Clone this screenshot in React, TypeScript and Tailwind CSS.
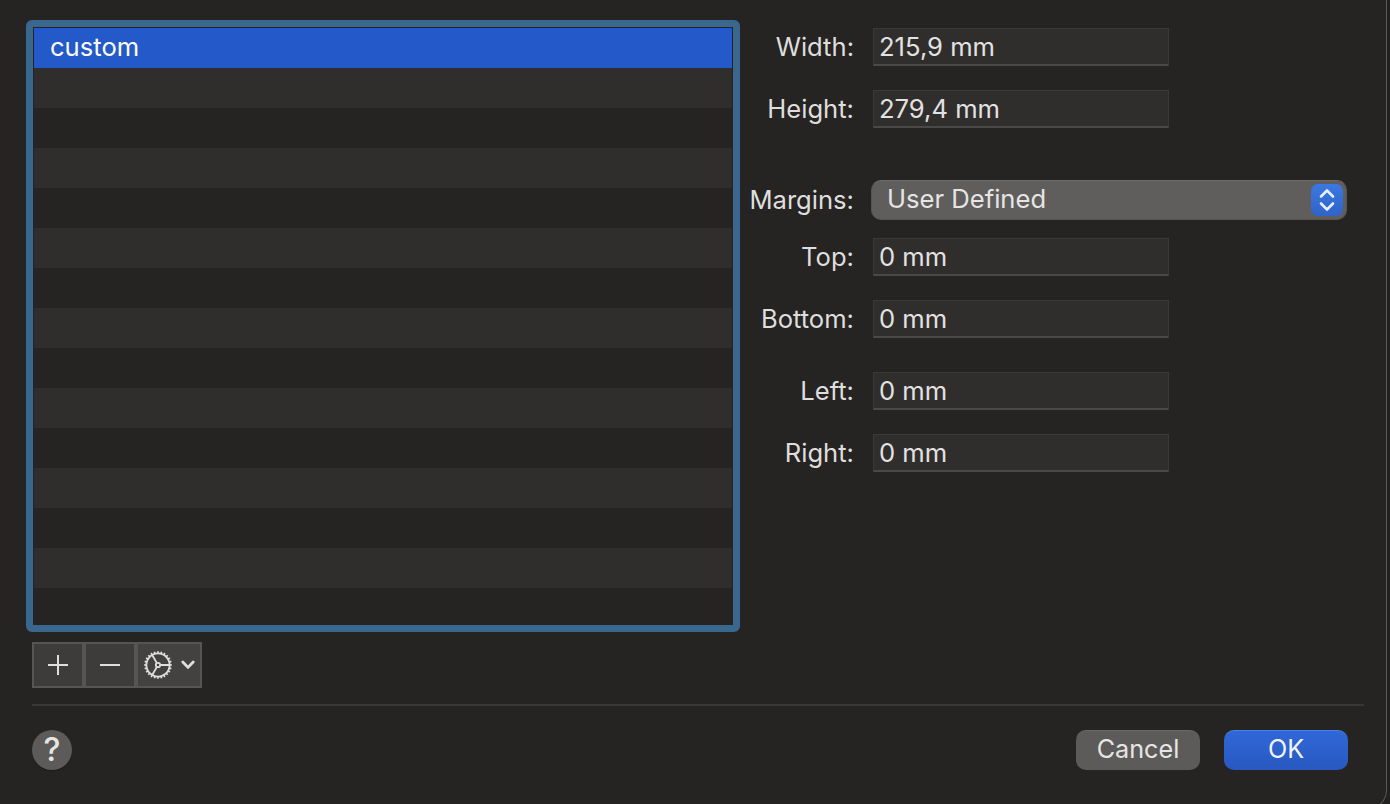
import React from 'react';

const font = "font-['Inter','Liberation_Sans',sans-serif]";

const Field: React.FC<{ label: string; value: string; className?: string }> = ({ label, value, className = '' }) => (
  <div className={`flex items-center h-[38px] ${className}`}>
    <label className="w-[130px] text-right text-[25.6px] text-[#dfdedd] leading-none pr-[1px]">{label}</label>
    <div className="ml-[18px] w-[296px] h-[38px] bg-[#2f2e2d] border-t border-x border-[#3a3938] border-b-2 border-b-[#4a4948] flex items-center pl-[5px] text-[25.6px] text-[#e3e2e1] leading-none">
      {value}
    </div>
  </div>
);

const GearIcon = () => {
  const teeth = Array.from({ length: 24 }, (_, i) => i * 15);
  return (
    <svg width="30" height="30" viewBox="0 0 30 30" fill="none" stroke="#e0dfde">
      <circle cx="15" cy="15" r="11.6" strokeWidth="1.8" />
      {teeth.map((a) => (
        <line key={a} x1="15" y1="1.2" x2="15" y2="3.6" strokeWidth="1.7" transform={`rotate(${a} 15 15)`} />
      ))}
      <circle cx="15" cy="15" r="2.2" strokeWidth="1.8" />
      <path d="M17.2 15H26M13.9 13.1L9.2 5M13.9 16.9L9.2 25" strokeWidth="1.8" />
    </svg>
  );
};

const rows = Array.from({ length: 14 }, (_, i) => i);

export default function App() {
  return (
    <div className={`w-[1390px] h-[804px] overflow-hidden bg-[#222120] ${font}`}>
      <div className="w-[1387px] h-[810px] bg-[#252423] rounded-br-[20px] border-r border-b border-[#5a5958] px-[26px] pt-[20px]">
        <div className="flex h-[612px]">
          <div className="w-[714px] h-[612px] rounded-[6px] border-[7px] border-[#3a678e] bg-[#252423] overflow-hidden px-[1px]">
            <div className="h-[1px] bg-[#252423]"></div>
            <div className="h-[40px] bg-[#2359c9] flex items-center pl-[16px] pb-[2px] text-[25.6px] text-white leading-none">custom</div>
            {rows.map((i) => (
              <div key={i} className={`h-[40px] ${i % 2 === 0 ? 'bg-[#2f2e2d]' : 'bg-[#252423]'}`}></div>
            ))}
          </div>
          <div className="ml-[-15px] pt-[8px]">
            <Field label="Width:" value="215,9 mm" />
            <Field label="Height:" value="279,4 mm" className="mt-[24px]" />
            <div className="flex items-center h-[40px] mt-[52px]">
              <label className="w-[130px] text-right text-[25.6px] text-[#dfdedd] leading-none pr-[1px]">Margins:</label>
              <div className="ml-[16px] w-[476px] h-[40px] rounded-[10px] bg-[#5f5e5c] border border-[#565553] border-t-[#6b6a68] flex items-center justify-between pl-[15px] pr-[3px] pb-[1px] text-[25.6px] text-[#e6e5e4] leading-none">
                <span className="pb-[1px]">User Defined</span>
                <span className="w-[32px] h-[32px] rounded-[7px] bg-gradient-to-b from-[#3b78e0] to-[#2f64c8] flex items-center justify-center">
                  <svg width="20" height="28" viewBox="0 0 20 28" fill="none" stroke="#e6eefc" strokeWidth="2.6" strokeLinecap="round" strokeLinejoin="round">
                    <path d="M4 10.5L10 4.5L16 10.5M4 17.5L10 23.5L16 17.5" />
                  </svg>
                </span>
              </div>
            </div>
            <Field label="Top:" value="0 mm" className="mt-[18px]" />
            <Field label="Bottom:" value="0 mm" className="mt-[24px]" />
            <Field label="Left:" value="0 mm" className="mt-[34px]" />
            <Field label="Right:" value="0 mm" className="mt-[24px]" />
          </div>
        </div>

        <div className="ml-[6px] mt-[10px] w-[170px] h-[46px] flex bg-[#565554] p-[2px] gap-[4px]">
          <button className="w-[48px] h-[42px] bg-[#3d3c3b] flex items-center justify-center">
            <svg width="22" height="22" viewBox="0 0 22 22" stroke="#dfdedd" strokeWidth="2"><path d="M11 1V21M1 11H21" /></svg>
          </button>
          <button className="w-[48px] h-[42px] bg-[#3d3c3b] flex items-center justify-center">
            <svg width="22" height="22" viewBox="0 0 22 22" stroke="#dfdedd" strokeWidth="2"><path d="M1 11H21" /></svg>
          </button>
          <button className="flex-1 h-[42px] bg-[#434241] flex items-center pl-[5px] gap-[8px]">
            <GearIcon />
            <svg width="14" height="10" viewBox="0 0 14 10" fill="none" stroke="#e0dfde" strokeWidth="2.8" strokeLinecap="round" strokeLinejoin="round"><path d="M1.8 2L7 7.4L12.2 2" /></svg>
          </button>
        </div>

        <div className="ml-[6px] mt-[16px] w-[1332px] h-[2px] bg-[#383736]"></div>

        <div className="ml-[6px] mt-[24px] w-[1316px] flex items-center justify-between">
          <button className="w-[40px] h-[40px] rounded-full bg-[#5c5b5a] shadow-[0_1px_1px_rgba(0,0,0,0.3)] flex items-center justify-center text-[32px] font-medium text-[#e6e5e4] leading-none">?</button>
          <div className="flex gap-[24px]">
            <button className="w-[124px] h-[40px] rounded-[10px] bg-[#5c5b5a] border-t border-[#6a6968] pb-[2px] text-[25.2px] text-[#e6e5e4] leading-none">Cancel</button>
            <button className="w-[124px] h-[40px] rounded-[10px] bg-gradient-to-b from-[#3068d8] to-[#2858c0] border-t border-[#4a80e4] pb-[2px] text-[25.2px] text-[#f0f3fb] leading-none">OK</button>
          </div>
        </div>
      </div>
    </div>
  );
}
